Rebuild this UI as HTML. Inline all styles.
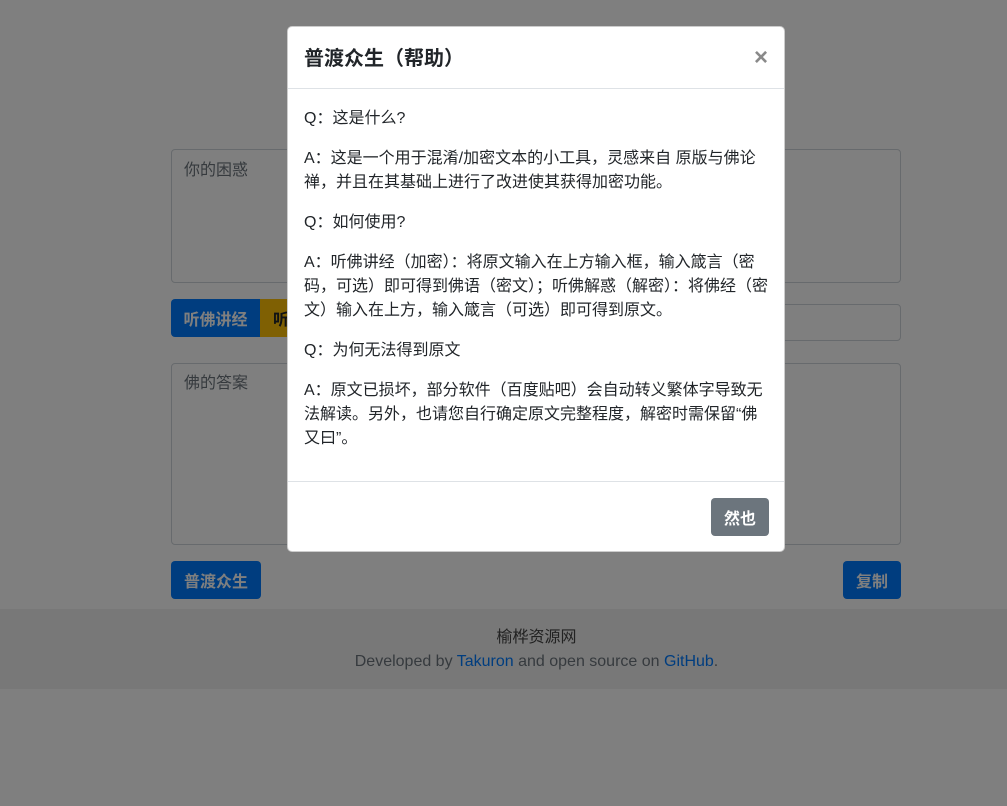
<!DOCTYPE html>
<html><head><meta charset="utf-8">
<style>
*{box-sizing:border-box;margin:0;padding:0}
body{width:1007px;height:806px;background:#fff;font-family:"Liberation Sans","Noto Sans CJK SC",sans-serif;color:#212529;position:relative;overflow:hidden;font-size:16px}
.ta{position:absolute;left:171px;width:730px;border:1px solid #ced4da;border-radius:4px;padding:8px 12px;color:#6c757d;line-height:24px}
.btn{position:absolute;color:#fff;font-weight:bold;border-radius:4px;display:flex;align-items:center;justify-content:center;font-size:16px}
.blue{background:#007bff}
footer{position:absolute;left:0;top:609px;width:1007px;height:80px;background:#f0f0f0;text-align:center;color:#6c757d;padding-top:17px;padding-left:66px;line-height:24px}
footer .t{color:#444}
footer a{color:#007bff;text-decoration:none}
.back{position:absolute;inset:0;background:rgba(0,0,0,.5)}
.modal{position:absolute;left:287px;top:26px;width:498px;height:526px;background:#fff;border-radius:5px;border:1px solid rgba(0,0,0,.2)}
.mh{height:62px;border-bottom:1px solid #dee2e6;position:relative}
.mh h5{position:absolute;left:16px;top:18px;font-size:20px;font-weight:bold;line-height:28px;color:#212529}
.x{position:absolute;right:16px;top:17px;font-size:24px;font-weight:bold;color:#8a8a8a;line-height:28px}
.mb{padding:18px 16px 0;line-height:24px;font-size:16px;color:#212529;height:393px;white-space:nowrap}
.mb p{margin-bottom:16px}
.mf{border-top:1px solid #dee2e6;position:absolute;left:0;right:0;top:454px;bottom:0}
</style></head><body>
<div class="ta" style="top:149px;height:134px;padding-top:9px">你的困惑</div>
<div class="btn blue" style="left:171px;top:299px;width:89px;height:38px;border-radius:4px 0 0 4px">听佛讲经</div>
<div class="btn" style="left:260px;top:299px;width:90px;height:38px;background:#ffc107;color:#212529;border-radius:0">听佛解惑</div>
<div class="ta" style="left:600px;width:301px;top:304px;height:37px"></div>
<div class="ta" style="top:363px;height:182px">佛的答案</div>
<div class="btn blue" style="left:171px;top:561px;width:90px;height:38px">普渡众生</div>
<div class="btn blue" style="left:843px;top:561px;width:58px;height:38px">复制</div>
<footer><div class="t">榆桦资源网</div><div>Developed by <a>Takuron</a> and open source on <a>GitHub</a>.</div></footer>
<div class="back"></div>
<div class="modal">
<div class="mh"><h5>普渡众生（帮助）</h5><span class="x">×</span></div>
<div class="mb">
<p>Q：这是什么?</p>
<p>A：这是一个用于混淆/加密文本的小工具，灵感来自 原版与佛论<br>禅，并且在其基础上进行了改进使其获得加密功能。</p>
<p>Q：如何使用?</p>
<p>A：听佛讲经（加密）：将原文输入在上方输入框，输入箴言（密<br>码，可选）即可得到佛语（密文）；听佛解惑（解密）：将佛经（密<br>文）输入在上方，输入箴言（可选）即可得到原文。</p>
<p>Q：为何无法得到原文</p>
<p>A：原文已损坏，部分软件（百度贴吧）会自动转义繁体字导致无<br>法解读。另外，也请您自行确定原文完整程度，解密时需保留“佛<br>又曰”。</p>
</div>
<div class="mf"><div class="btn" style="left:423px;top:16px;width:58px;height:38px;background:#6c757d">然也</div></div>
</div>
</body></html>
